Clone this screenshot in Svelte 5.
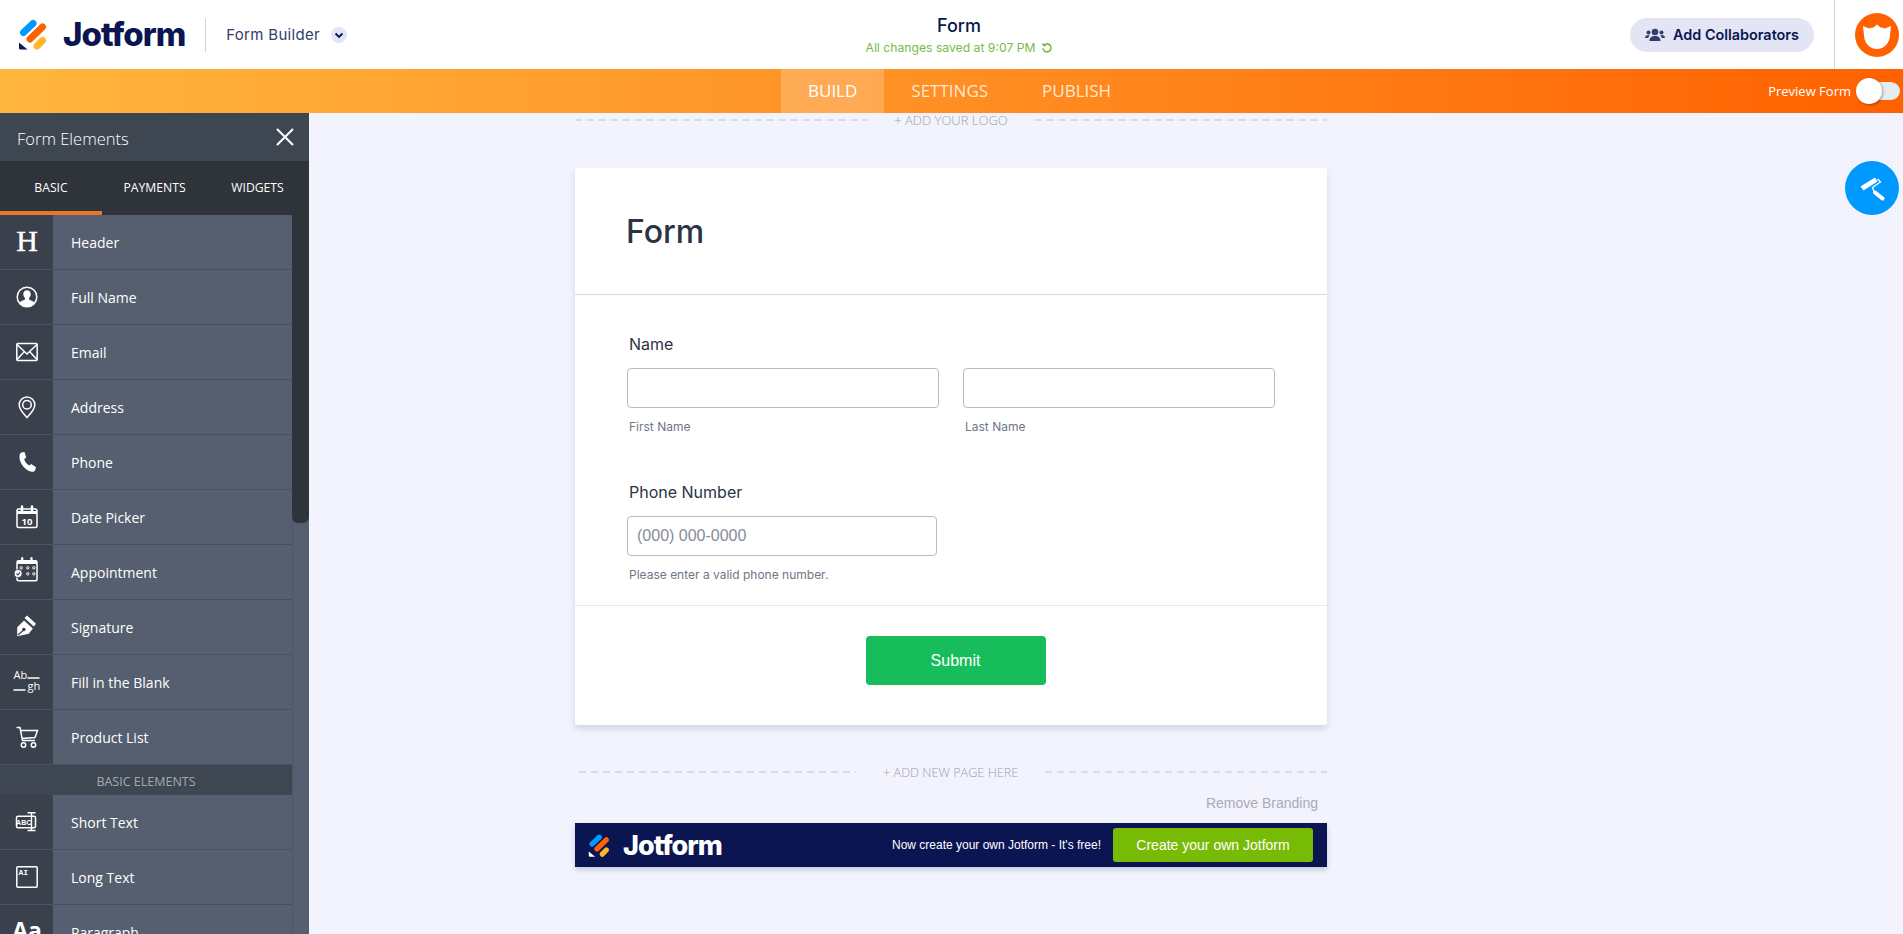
<script>
  const topItems = ['Header', 'Full Name', 'Email', 'Address', 'Phone', 'Date Picker', 'Appointment', 'Signature', 'Fill in the Blank', 'Product List'];
  const basicItems = ['Short Text', 'Long Text', 'Paragraph'];
</script>

{#snippet logoMark()}
  <svg class="mark" viewBox="18 17 32 33">
    <g fill="none" stroke-width="7" stroke-linecap="round">
      <path d="M23.5 31.5 33 22.5" stroke="#0099ff" />
      <path d="M30 38 42.5 26" stroke="#ff6100" />
      <path d="M37 45 42.5 39.5" stroke="#ffb629" />
    </g>
    <path d="M19 41.5 27.5 48.5H20.5a1.5 1.5 0 0 1-1.5-1.5z" fill="var(--corner)" />
  </svg>
{/snippet}

{#snippet icon(name)}
  <svg class="el-icon" viewBox="0 0 24 24" fill="none" stroke="#fff" stroke-width="1.5">
    {#if name === 'Header'}
      <text x="12" y="21" text-anchor="middle" class="glyph-h">H</text>
    {:else if name === 'Full Name'}
      <circle cx="12" cy="12" r="9.8" />
      <path d="M4.5 18c1.5-2.5 4.5-2.5 5.5-3.8V13c-1-.8-1.7-2.2-1.7-4 0-2.4 1.5-3.8 3.7-3.8s3.7 1.4 3.7 3.8c0 1.8-.7 3.2-1.7 4v1.2c1 1.3 4 1.3 5.5 3.8-1.8 3-4.5 4-7.5 4s-5.7-1-7.5-4z" fill="#fff" stroke="none" />
    {:else if name === 'Email'}
      <rect x="1.8" y="3.5" width="20.4" height="17" rx="1" />
      <path d="M2 4.5 12 14 22 4.5M2 19.5l7-7.5M22 19.5 15 12" />
    {:else if name === 'Address'}
      <path d="M12 22.5C9 19 4.2 15 4.2 9.8a7.8 7.8 0 0 1 15.6 0C19.8 15 15 19 12 22.5z" />
      <circle cx="12" cy="9.8" r="4.3" />
    {:else if name === 'Phone'}
      <path d="M6.5 2.5 9.5 2l1.7 5.5-2 1.5c.5 2.5 2.7 5.3 5 6.5l2-1.5 4.8 3.2-.9 3c-.5 1.2-2 1.7-3.5 1.5C10 20.5 4 13 4.5 6c.1-1.7.8-3 2-3.500z" fill="#fff" stroke="none" />
    {:else if name === 'Date Picker'}
      <rect x="2" y="4" width="20" height="18.5" rx="1.5" />
      <path d="M2 7.5h20" stroke-width="3" />
      <path d="M7 1.5v4M17 1.5v4" stroke-width="2.5" stroke-linecap="round" />
      <text x="12" y="20" text-anchor="middle" class="glyph-small">10</text>
    {:else if name === 'Appointment'}
      <rect x="2" y="0.8" width="20" height="20" rx="1.5" />
      <path d="M2 2.5h20" stroke-width="3" />
      <path d="M7.2 -2v3.5M16.5 -2v3.5" stroke-width="2.2" stroke-linecap="round" />
      <g stroke-width="1">
        <circle cx="6.2" cy="7.8" r="1.2" /><circle cx="12.8" cy="7.8" r="1.2" /><circle cx="18.8" cy="7.8" r="1.2" />
        <circle cx="12.8" cy="13.8" r="1.2" /><circle cx="18.8" cy="13.8" r="1.2" />
      </g>
      <circle cx="3.2" cy="13.5" r="4" fill="#fff" stroke="#3a414d" stroke-width="0.8" />
      <path d="M1.5 13.5 2.9 15 5 12.3" stroke="#3a414d" stroke-width="1.1" />
    {:else if name === 'Signature'}
      <path d="M9.5 3 12 .5 21 8.8 18.8 11.5z" fill="#fff" stroke="none" />
      <path d="M9 5.5 17.8 13.5 13.8 18.8 2.2 21.2V12.2z" fill="#fff" stroke="none" />
      <path d="M2.8 20 8.2 15.5" stroke="#3a414d" stroke-width="1.1" />
      <circle cx="8.8" cy="14.5" r="1.8" fill="#3a414d" stroke="none" />
    {:else if name === 'Fill in the Blank'}
      <text x="-1.5" y="8.5" class="glyph-fill">Ab</text>
      <path d="M12.5 8H24.5M-1.5 20H10.5" stroke-width="1.3" />
      <text x="12.5" y="19.5" class="glyph-fill">gh</text>
    {:else if name === 'Product List'}
      <path d="M1.5 2.5H5L7.5 15.5H20" />
      <path d="M5.8 5.5H22.5L20 12.5 7 13.5" />
      <circle cx="8.5" cy="20" r="2.2" /><circle cx="18.5" cy="20" r="2.2" />
    {:else if name === 'Short Text'}
      <rect x="1.5" y="6.2" width="19" height="11.6" rx="1.5" />
      <text x="8.7" y="14.7" text-anchor="middle" class="glyph-abc">ABC</text>
      <path d="M12.5 2.8h8M12.5 20.5h8M16.5 2.8v17.7" stroke-width="1.4" />
    {:else if name === 'Long Text'}
      <rect x="1.8" y="1.8" width="20.4" height="20.4" rx="1" />
      <text x="3.5" y="10" class="glyph-ai">AI</text>
    {:else if name === 'Paragraph'}
      <text x="12" y="18.5" text-anchor="middle" class="glyph-aa">Aa</text>
    {/if}
  </svg>
{/snippet}

{#snippet row(name)}
  <li class="row">
    <span class="icon-cell">{@render icon(name)}</span>
    <span class="row-label">{name}</span>
  </li>
{/snippet}

<div class="page">
  <header class="topbar">
    <div class="brand">
      <span class="brand-logo">{@render logoMark()}</span>
      <span class="wordmark">Jotform</span>
      <span class="divider"></span>
      <span class="product">Form Builder</span>
      <span class="chevron">
        <svg viewBox="0 0 16 16" fill="none" stroke="#0a1551" stroke-width="1.8"><path d="M4.5 6.5 8 10l3.5-3.5" /></svg>
      </span>
    </div>
    <div class="title-block">
      <div class="form-name">Form</div>
      <div class="saved">
        All changes saved at 9:07 PM
        <svg viewBox="0 0 12 12" fill="none" stroke="#78bb44" stroke-width="1.6"><path d="M3 3.2a4 4 0 1 1-1 3M1.5 1.5 3 3.5l2.2-.8" /></svg>
      </div>
    </div>
    <div class="top-actions">
      <button class="collab">
        <svg viewBox="0 0 20 14" fill="#343c6a"><circle cx="10" cy="4" r="3.3" /><circle cx="3.5" cy="4.5" r="2" /><circle cx="16.5" cy="4.5" r="2" /><path d="M4.5 13c0-3.5 2-5 5.5-5s5.5 1.5 5.5 5zM0 10c0-2 1.5-3 3.5-3l1.2.4C3.8 8.2 3.3 9 3.2 10zM20 10c0-2-1.5-3-3.5-3l-1.2.4c.9.8 1.4 1.6 1.5 2.6z" /></svg>
        Add Collaborators
      </button>
      <div class="avatar-cell">
        <svg class="avatar" viewBox="0 0 44 44">
          <circle cx="22" cy="22" r="22" fill="#ff6100" />
          <path d="M8 13 14 15.5Q16 14.500 18.500 14.500L22 11.500 25.500 14.500Q28 14.500 30 15.500L36 13 35 22C35 30 29 36 22 36S9 30 9 22z" fill="#fff" />
        </svg>
      </div>
    </div>
  </header>

  <nav class="navbar">
    <span></span>
    <div class="nav-tabs">
      <span class="nav-tab active">BUILD</span>
      <span class="nav-tab">SETTINGS</span>
      <span class="nav-tab">PUBLISH</span>
    </div>
    <div class="preview">
      Preview Form
      <span class="toggle"><span class="knob"></span></span>
    </div>
  </nav>

  <div class="workspace">
    <aside class="sidebar">
      <div class="side-head">
        <span class="side-title">Form Elements</span>
        <svg viewBox="0 0 18 18" stroke="#fff" stroke-width="2"><path d="M1 1 17 17M17 1 1 17" /></svg>
      </div>
      <div class="side-tabs">
        <span class="side-tab selected">BASIC</span>
        <span class="side-tab">PAYMENTS</span>
        <span class="side-tab">WIDGETS</span>
      </div>
      <div class="list-wrap">
        <ul class="list">
          {#each topItems as name}
            {@render row(name)}
          {/each}
          <li class="section">BASIC ELEMENTS</li>
          {#each basicItems as name}
            {@render row(name)}
          {/each}
        </ul>
        <div class="scroll-track"><div class="scroll-thumb"></div></div>
      </div>
    </aside>

    <main class="canvas">
      <div class="column">
        <div class="dash-row logo-row">
          <span class="dash"></span>
          <span class="dash-label">+ ADD YOUR LOGO</span>
          <span class="dash"></span>
        </div>

        <section class="card">
          <div class="card-head"><h1>Form</h1></div>
          <div class="fields">
            <div class="field-label">Name</div>
            <div class="name-row">
              <div class="name-col">
                <div class="input"></div>
                <div class="hint">First Name</div>
              </div>
              <div class="name-col">
                <div class="input"></div>
                <div class="hint">Last Name</div>
              </div>
            </div>
            <div class="field-label phone-label">Phone Number</div>
            <div class="input phone-input">(000) 000-0000</div>
            <div class="hint">Please enter a valid phone number.</div>
          </div>
          <div class="card-foot">
            <button class="submit">Submit</button>
          </div>
        </section>

        <div class="dash-row page-row">
          <span class="dash first"></span>
          <span class="dash-label">+ ADD NEW PAGE HERE</span>
          <span class="dash"></span>
        </div>

        <div class="remove">Remove Branding</div>

        <div class="branding">
          <span class="brand-logo small">{@render logoMark()}</span>
          <span class="wordmark light">Jotform</span>
          <span class="pitch">Now create your own Jotform - It's free!</span>
          <button class="create">Create your own Jotform</button>
        </div>
      </div>
    </main>

    <button class="paint" aria-label="Form designer">
      <svg viewBox="0 0 54 54">
        <path d="M15.5 25.5 18.5 29.500 32.500 20.500 30 16.500z" fill="#fff" />
        <path d="M32.500 18 35.500 21 27.500 26.500 29 30.500" fill="none" stroke="#fff" stroke-width="1.300" />
        <path d="M30 31.500 37.500 37.500" fill="none" stroke="#fff" stroke-width="4" stroke-linecap="round" />
      </svg>
    </button>
  </div>
</div>

<style>
  :global(body) {
    margin: 0;
    overflow: hidden;
  }

  .page {
    height: 934px;
    display: flex;
    flex-direction: column;
    overflow: hidden;
    position: relative;
    font-family: "Open Sans", sans-serif;
  }

  .topbar {
    height: 69px;
    flex: none;
    display: grid;
    grid-template-columns: 781px 356px 1fr;
    background: #fff;
    color: #0a1551;
  }

  .brand {
    display: flex;
    align-items: center;
    padding-left: 18px;
  }

  .brand-logo {
    --corner: #0a1551;
    width: 32px;
    height: 33px;
    display: block;
  }

  .brand-logo.small {
    --corner: #fff;
    width: 24px;
    height: 25px;
  }

  .mark {
    display: block;
    width: 100%;
    height: 100%;
  }

  .wordmark {
    margin-left: 13px;
    font-family: Inter, sans-serif;
    font-weight: 800;
    font-size: 33px;
    letter-spacing: -1px;
    line-height: 1;
  }

  .wordmark.light {
    margin-left: 11px;
    color: #fff;
    font-size: 27px;
  }

  .divider {
    width: 1px;
    height: 34px;
    background: #cfd3e2;
    margin: 0 20px;
  }

  .product {
    font-family: Inter, sans-serif;
    font-size: 15px;
    letter-spacing: 0.3px;
    color: #343c6a;
  }

  .chevron {
    width: 16px;
    height: 16px;
    border-radius: 50%;
    background: #e3e5f5;
    margin-left: 11px;
  }

  .chevron svg {
    display: block;
  }

  .title-block {
    text-align: center;
    padding-top: 15px;
  }

  .form-name {
    font-family: Inter, sans-serif;
    font-size: 18px;
    font-weight: 500;
    line-height: 22px;
  }

  .saved {
    font-family: Inter, sans-serif;
    font-size: 12.2px;
    line-height: 16px;
    margin-top: 3px;
    color: #78bb44;
    white-space: nowrap;
    display: flex;
    justify-content: center;
    align-items: center;
    gap: 5px;
  }

  .saved svg {
    width: 12px;
    height: 12px;
  }

  .top-actions {
    display: flex;
    justify-content: flex-end;
    align-items: stretch;
  }

  .collab {
    align-self: center;
    height: 34px;
    width: 184px;
    margin-right: 20px;
    border: 0;
    border-radius: 17px;
    background: #e3e5f5;
    color: #0a1551;
    font-family: Inter, sans-serif;
    font-weight: 600;
    font-size: 14.4px;
    display: flex;
    align-items: center;
    justify-content: center;
    gap: 8px;
    padding: 0;
  }

  .collab svg {
    width: 20px;
    height: 14px;
  }

  .avatar-cell {
    width: 69px;
    border-left: 1px solid #cfd3e2;
    display: flex;
    align-items: center;
    padding-left: 20px;
    box-sizing: border-box;
  }

  .avatar {
    width: 44px;
    height: 44px;
  }

  .navbar {
    height: 44px;
    flex: none;
    display: grid;
    grid-template-columns: 781px 356px 1fr;
    background: linear-gradient(90deg, #ffb63f 0%, #ff8a20 55%, #ff6100 100%);
    color: #fff;
  }

  .nav-tabs {
    display: flex;
  }

  .nav-tab {
    padding: 0 27px;
    line-height: 44px;
    font-size: 17px;
    color: #ffe9d2;
  }

  .nav-tab.active {
    background: rgba(255, 255, 255, 0.22);
    color: #fff;
  }

  .preview {
    display: flex;
    justify-content: flex-end;
    align-items: center;
    font-size: 13px;
    padding-right: 3px;
    gap: 9px;
    color: #fff;
  }

  .toggle {
    width: 40px;
    height: 18px;
    border-radius: 9px;
    background: #e8ecef;
    position: relative;
  }

  .knob {
    position: absolute;
    left: -4px;
    top: -4px;
    width: 26px;
    height: 26px;
    border-radius: 50%;
    background: #fff;
    box-shadow: 1px 1px 3px rgba(0, 0, 0, 0.35);
  }

  .workspace {
    flex: 1;
    min-height: 0;
    display: flex;
  }

  .sidebar {
    width: 309px;
    flex: none;
    display: flex;
    flex-direction: column;
    background: #555f6f;
    color: #fff;
  }

  .side-head {
    height: 48px;
    flex: none;
    background: #3e4652;
    display: flex;
    align-items: center;
    justify-content: space-between;
    padding: 0 15px 0 17px;
    font-size: 16.5px;
    font-weight: 300;
  }

  .side-title {
    margin-top: 2px;
  }

  .side-head svg {
    width: 18px;
    height: 18px;
  }

  .side-tabs {
    height: 54px;
    flex: none;
    background: #2f343b;
    display: grid;
    grid-template-columns: repeat(3, 1fr);
  }

  .side-tab {
    height: 54px;
    box-sizing: border-box;
    padding-top: 19px;
    font-size: 12.2px;
    line-height: 16px;
    text-align: center;
  }

  .side-tab.selected {
    border-bottom: 4px solid #e9772a;
    width: 102px;
  }

  .list-wrap {
    flex: 1;
    min-height: 0;
    display: flex;
    overflow: hidden;
  }

  .list {
    width: 292px;
    flex: none;
    margin: 0;
    padding: 0;
    list-style: none;
  }

  .row {
    height: 55px;
    display: flex;
    box-sizing: border-box;
    border-bottom: 1px solid #465060;
  }

  .icon-cell {
    width: 53px;
    flex: none;
    background: #3a414d;
    display: flex;
    align-items: center;
    justify-content: center;
    margin-bottom: -1px;
    border-bottom: 1px solid #4b5462;
  }

  .el-icon {
    width: 24px;
    height: 24px;
    overflow: visible;
  }

  .glyph-h {
    font-family: "Liberation Serif", serif;
    font-size: 30px;
    font-weight: 400;
    fill: #fff;
    stroke: #fff;
    stroke-width: 0.4;
  }

  .glyph-small {
    font-family: "Open Sans", sans-serif;
    font-size: 9.5px;
    font-weight: 700;
    fill: #fff;
    stroke: none;
  }

  .glyph-fill {
    font-family: "Open Sans", sans-serif;
    font-size: 11px;
    fill: #fff;
    stroke: none;
  }

  .glyph-abc {
    font-family: "Liberation Sans", sans-serif;
    font-size: 7px;
    font-weight: 700;
    fill: #fff;
    stroke: none;
  }

  .glyph-ai {
    font-family: "Liberation Mono", monospace;
    font-size: 8px;
    font-weight: 700;
    fill: #fff;
    stroke: none;
  }

  .glyph-aa {
    font-family: "Open Sans", sans-serif;
    font-size: 23px;
    font-weight: 700;
    fill: #fff;
    stroke: none;
  }

  .row-label {
    padding-left: 18px;
    font-size: 14px;
    line-height: 56px;
  }

  .section {
    height: 30px;
    background: #3e4652;
    color: #a3a9b2;
    font-size: 12.5px;
    line-height: 34px;
    text-align: center;
  }

  .scroll-track {
    width: 17px;
    flex: none;
    border-left: 1px solid #4b5462;
    box-sizing: border-box;
  }

  .scroll-thumb {
    height: 308px;
    margin-left: -1px;
    width: 17px;
    background: #2f343b;
    border-radius: 0 0 6px 6px;
  }

  .canvas {
    flex: 1;
    min-width: 0;
    background: #f3f3fe;
    padding-left: 266px;
  }

  .column {
    width: 752px;
  }

  .dash-row {
    display: flex;
    align-items: center;
  }

  .logo-row {
    height: 14px;
    gap: 27px;
  }

  .dash {
    flex: 1;
    height: 2px;
    background: repeating-linear-gradient(90deg, #d9dbe8 0 7px, transparent 7px 12px);
  }

  .dash.first {
    flex: 0 0 277px;
  }

  .dash-label {
    font-size: 13px;
    font-weight: 300;
    color: #9b9fad;
    white-space: nowrap;
  }

  .page-row .dash-label {
    font-size: 12.7px;
  }

  .card {
    margin-top: 41px;
    height: 557px;
    background: #fff;
    border-radius: 3px;
    box-shadow: 0 4px 6px rgba(87, 114, 147, 0.22);
    display: flex;
    flex-direction: column;
  }

  .card-head {
    height: 127px;
    flex: none;
    box-sizing: border-box;
    padding: 44px 51px 0;
    border-bottom: 1px solid #d8dae9;
  }

  h1 {
    margin: 0;
    font-family: Inter, sans-serif;
    font-size: 32px;
    font-weight: 500;
    line-height: 40px;
    color: #2c3345;
  }

  .fields {
    height: 311px;
    flex: none;
    box-sizing: border-box;
    padding: 39px 52px 0;
    border-bottom: 1px solid #e6e7f0;
    font-family: Inter, sans-serif;
  }

  .field-label {
    font-size: 16px;
    line-height: 20px;
    padding-left: 2px;
    color: #2c3345;
  }

  .name-row {
    display: flex;
    gap: 24px;
    margin-top: 14px;
  }

  .name-col {
    width: 312px;
  }

  .input {
    height: 40px;
    box-sizing: border-box;
    border: 1px solid #b8bdc9;
    border-radius: 4px;
    background: #fff;
  }

  .hint {
    margin-top: 11px;
    padding-left: 2px;
    font-size: 12px;
    line-height: 16px;
    color: #6f7687;
  }

  .phone-label {
    margin-top: 47px;
  }

  .phone-input {
    width: 310px;
    margin-top: 14px;
    padding-left: 9px;
    font-family: "Liberation Sans", sans-serif;
    font-size: 16px;
    line-height: 38px;
    color: #868c9b;
  }

  .card-foot {
    flex: 1;
    display: flex;
    justify-content: center;
    padding: 30px 0 0 9px;
    box-sizing: border-box;
  }

  .submit {
    width: 180px;
    height: 49px;
    border: 0;
    border-radius: 4px;
    background: #18bd5b;
    color: #fff;
    font-family: "Liberation Sans", sans-serif;
    font-size: 16px;
  }

  .page-row {
    height: 14px;
    margin-top: 40px;
    padding-left: 4px;
    gap: 27px;
  }

  .remove {
    margin-top: 14px;
    height: 20px;
    padding-right: 9px;
    text-align: right;
    font-family: "Liberation Sans", sans-serif;
    font-size: 14px;
    line-height: 20px;
    color: #a9abb5;
  }

  .branding {
    margin-top: 10px;
    height: 44px;
    background: #0a1551;
    box-shadow: 0 3px 5px rgba(87, 114, 147, 0.3);
    display: flex;
    align-items: center;
    padding: 0 14px 0 13px;
  }

  .pitch {
    margin-left: auto;
    color: #fff;
    font-family: "Liberation Sans", sans-serif;
    font-size: 12px;
  }

  .create {
    margin-left: 12px;
    width: 200px;
    height: 34px;
    border: 0;
    border-radius: 3px;
    background: #78bb07;
    color: #fff;
    font-family: "Liberation Sans", sans-serif;
    font-size: 14px;
  }

  .paint {
    position: absolute;
    left: 1845px;
    top: 161px;
    width: 54px;
    height: 54px;
    border: 0;
    border-radius: 50%;
    background: #0099ff;
    padding: 0;
  }

  .paint svg {
    display: block;
    width: 54px;
    height: 54px;
  }
</style>
